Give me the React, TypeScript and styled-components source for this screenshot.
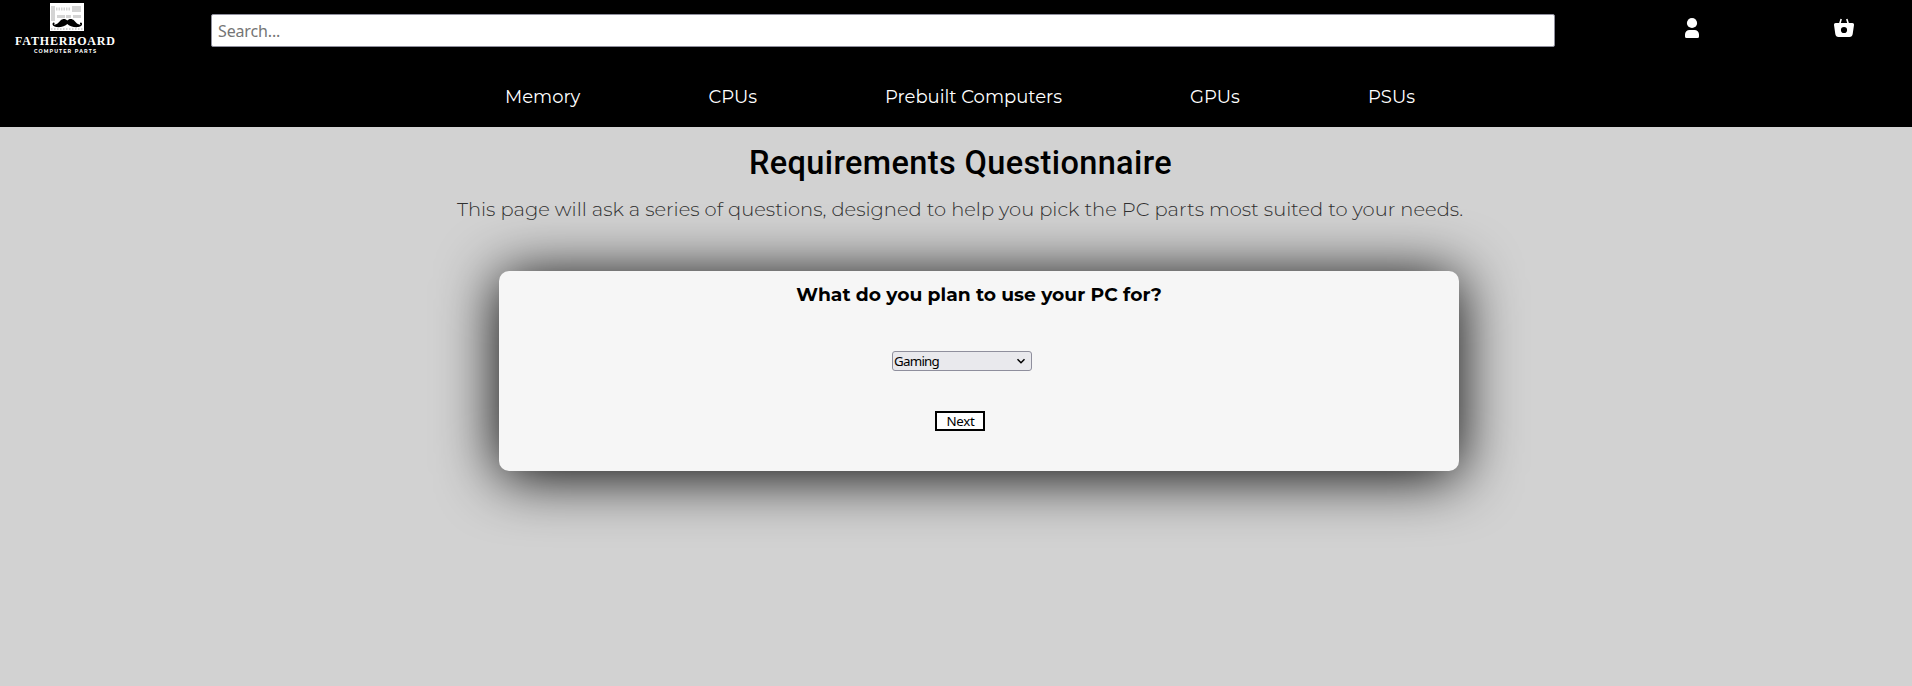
import React from 'react';
import styled, { createGlobalStyle } from 'styled-components';

const GlobalStyle = createGlobalStyle`
  * { box-sizing: border-box; }
  body {
    margin: 0;
    min-height: 100vh;
    background: #d2d2d2;
    font-family: Montserrat, Inter, sans-serif;
  }
`;

const Header = styled.header`
  height: 127px;
  background: #000;
`;

const TopBar = styled.div`
  display: grid;
  grid-template-columns: 211px 1344px 274px 30px 1fr;
  height: 67px;
`;

const LogoLink = styled.a`
  display: block;
  height: 60px;
`;

const SearchInput = styled.input`
  width: 100%;
  height: 33px;
  margin: 14px 0 0;
  padding: 0 6px;
  border: 1px solid #8f8f9d;
  border-radius: 2px;
  background: #fff;
  font: 16px 'Noto Sans', sans-serif;
  letter-spacing: -0.15px;
  &::placeholder { color: #757575; opacity: 1; }
`;

const IconLink = styled.a<{ $inset?: number }>`
  display: block;
  height: 24px;
  margin-top: 16px;
  padding-left: ${({ $inset = 0 }) => $inset}px;
  color: #fff;
  svg { display: block; }
`;

const Nav = styled.nav`
  display: flex;
  justify-content: center;
  gap: 128px;
  height: 60px;
  padding-left: 8px;
  line-height: 61px;
`;

const NavLink = styled.a`
  color: #fff;
  font-size: 18px;
`;

const Main = styled.main`
  display: flex;
  flex-direction: column;
  padding-top: 18px;
  text-align: center;
`;

const Title = styled.h1`
  margin: 0 0 16px;
  padding-left: 9px;
  font: 500 32.5px/36px Roboto, sans-serif;
  letter-spacing: 0.37px;
`;

const Intro = styled.p`
  margin: 0;
  padding-left: 8px;
  color: #303030;
  font-size: 19.48px;
  font-weight: 300;
  line-height: 25px;
`;

const Card = styled.section`
  display: flex;
  flex-direction: column;
  align-items: center;
  width: 960px;
  height: 200px;
  margin: 49px 0 0 499px;
  padding-top: 12px;
  border-radius: 10px;
  background: #f6f6f6;
  box-shadow: 0 5px 60px #000;
`;

const Question = styled.h2`
  margin: 0 0 44px;
  font-size: 18.72px;
  font-weight: 700;
  line-height: 24px;
`;

const Select = styled.button`
  display: flex;
  align-items: center;
  justify-content: space-between;
  width: 140px;
  height: 20px;
  margin: 0 34px 40px 0;
  padding: 0 5px 0 1px;
  border: 1px solid #8f8f9d;
  border-radius: 3px;
  background: #e9e9ed;
  color: #000;
  font: 13.333px/18px 'Noto Sans', sans-serif;
  letter-spacing: -0.75px;
`;

const NextButton = styled.button`
  width: 50px;
  height: 20px;
  margin-right: 38px;
  padding: 0 0 0 1px;
  border: 2px solid #000;
  background: #fff;
  color: #000;
  font: 13.333px/16px 'Noto Sans', sans-serif;
  letter-spacing: -0.3px;
`;

const links = ['Memory', 'CPUs', 'Prebuilt Computers', 'GPUs', 'PSUs'];

const Logo = () => (
  <svg width="130" height="60" viewBox="0 0 130 60" fill="#fff">
    <path d="M50 3h34v28H50z" />
    <g fill="#d4d4d4">
      <path d="M51 6h4v15h-4zM72 6h9v6h-9zM57 15h8v3h-8zM66 15h5v3h-5zM73 15h8v3h-8z" />
      <path d="M56 9h15" stroke="#d4d4d4" strokeWidth="3" strokeDasharray="1.5 1" />
      <path d="M51 29h32" stroke="#d4d4d4" strokeWidth="2" strokeDasharray="1.5 1.5" />
    </g>
    <path fill="#000" d="M67.3 20.6C65.8 18.5 62.5 18.3 60.5 20.5C58.5 22.9 56.3 25 53.9 24.6C55 24.2 54.8 22.3 53.5 22.6C51.5 23.3 52.5 26.8 56.5 27.1C61 27.4 65.5 26.3 67.3 24C69.1 26.3 73.6 27.4 78.1 27.1C82.1 26.8 83.1 23.3 81.1 22.6C79.8 22.3 79.6 24.2 80.7 24.6C78.3 25 76.1 22.9 74.1 20.5C72.1 18.3 68.8 18.5 67.3 20.6Z" />
    <text x="15" y="45" fontFamily="Liberation Serif, serif" fontWeight="700" fontSize="12" textLength="100">FATHERBOARD</text>
    <text x="34" y="53" fontFamily="Montserrat, sans-serif" fontWeight="700" fontSize="4.9" textLength="62">COMPUTER PARTS</text>
  </svg>
);

const UserIcon = () => (
  <svg width="14" height="24" viewBox="0 0 14 24" fill="currentColor">
    <circle cx="7" cy="7" r="5.1" />
    <path d="M4.5 14h5A4.5 4.5 0 0 1 14 18.5V20.5Q14 22 12.5 22H1.5Q0 22 0 20.5V18.5A4.5 4.5 0 0 1 4.5 14Z" />
  </svg>
);

const BasketIcon = () => (
  <svg width="20" height="24" viewBox="0 0 20 24" fill="currentColor">
    <path fillRule="evenodd" d="M2 7H18Q20.2 7 20 9L18.7 18Q18.2 21 15.5 21H4.5Q1.8 21 1.3 18L0 9Q-.2 7 2 7ZM10 10.9a3.1 3.1 0 1 0 0 6.2a3.1 3.1 0 1 0 0-6.2Z" />
    <path d="M5.8 7.5L7.2 3M14.2 7.5L12.8 3" stroke="currentColor" strokeWidth="1.6" />
  </svg>
);

export default function App() {
  return (
    <>
      <GlobalStyle />
      <Header>
        <TopBar>
          <LogoLink aria-label="Home"><Logo /></LogoLink>
          <SearchInput placeholder="Search..." />
          <IconLink aria-label="Account" $inset={130}><UserIcon /></IconLink>
          <IconLink aria-label="Basket" $inset={5}><BasketIcon /></IconLink>
        </TopBar>
        <Nav>{links.map(link => <NavLink key={link}>{link}</NavLink>)}</Nav>
      </Header>
      <Main>
        <Title>Requirements Questionnaire</Title>
        <Intro>This page will ask a series of questions, designed to help you pick the PC parts most suited to your needs.</Intro>
        <Card>
          <Question>What do you plan to use your PC for?</Question>
          <Select>
            Gaming
            <svg width="10" height="10" viewBox="0 0 10 10" fill="none" stroke="#000" strokeWidth="1.5">
              <path d="M1.5 3.2L5 6.7L8.5 3.2" />
            </svg>
          </Select>
          <NextButton>Next</NextButton>
        </Card>
      </Main>
    </>
  );
}
